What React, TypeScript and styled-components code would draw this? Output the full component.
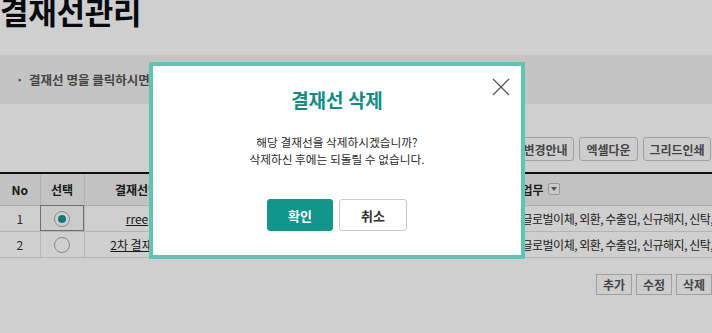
import React from "react";
import styled, { createGlobalStyle } from "styled-components";

const GlobalStyle = createGlobalStyle`
  html, body {
    margin: 0;
    padding: 0;
    background: #ffffff;
    overflow: hidden;
  }
  body {
    font-family: "Noto Sans CJK KR", "Noto Sans", sans-serif;
    color: #222;
  }
  * {
    box-sizing: border-box;
  }
`;

const Page = styled.div`
  width: 712px;
  height: 333px;
  overflow: hidden;
`;

const Title = styled.h1`
  margin: -5px 0 0 0;
  height: 31px;
  font-size: 31px;
  line-height: 31px;
  font-weight: 700;
  color: #0c0c14;
  letter-spacing: -0.3px;
`;

const InfoBox = styled.div`
  margin-top: 29px;
  height: 49px;
  background: #f2f2f2;
  display: flex;
  align-items: center;
  padding-left: 16px;
  font-size: 12.5px;
  font-weight: 700;
  color: #555;
`;

const Toolbar = styled.div`
  margin-top: 33px;
  display: flex;
  justify-content: flex-end;
  gap: 5px;
  padding-right: 1px;
`;

const ToolButton = styled.button<{ $w: number }>`
  width: ${(p) => p.$w}px;
  height: 24px;
  border: 1px solid #c6c6c6;
  border-radius: 3px;
  background: #fdfdfd;
  font-family: inherit;
  font-size: 12px;
  font-weight: 700;
  color: #555;
  padding: 0;
`;

const TableWrap = styled.div`
  margin-top: 11px;
  width: 712px;
  overflow: hidden;
`;

const Table = styled.table`
  width: 820px;
  border-collapse: collapse;
  table-layout: fixed;
  border-top: 2px solid #111;
  font-size: 12px;
`;

const Th = styled.th<{ $align?: string }>`
  height: 32px;
  background: #efefef;
  border-right: 1px solid #dcdcdc;
  border-bottom: 1px solid #d6d6d6;
  font-weight: 700;
  font-size: 12px;
  color: #222;
  text-align: ${(p) => p.$align || "center"};
  padding: 0;
`;

const Td = styled.td<{ $align?: string; $focus?: boolean }>`
  height: 26px;
  background: ${(p) => (p.$focus ? "#fbfbfb" : "#fff")};
  border-right: 1px solid #e0e0e0;
  border-bottom: 1px solid #dedede;
  outline: ${(p) => (p.$focus ? "1px solid #8a8a8a" : "none")};
  outline-offset: -1px;
  text-align: ${(p) => p.$align || "center"};
  color: #333;
  padding: 0 7px;
  white-space: nowrap;
  overflow: hidden;
`;

const TaskCell = styled(Td)`
  text-align: left;
  padding-left: 26px;
  letter-spacing: -0.5px;
  color: #2a2a2a;
`;

const LinkText = styled.span`
  text-decoration: underline;
  color: #222;
`;

const HeadInner = styled.span`
  display: inline-flex;
  align-items: center;
  gap: 4px;
  padding-left: 26px;
`;

const FilterIcon = styled.span`
  display: inline-flex;
  align-items: center;
  justify-content: center;
  width: 12px;
  height: 12px;
  border: 1px solid #b9b9b9;
  border-radius: 2px;
  background: #f8f8f8;
`;

const Radio = styled.span<{ $checked?: boolean }>`
  display: inline-flex;
  align-items: center;
  justify-content: center;
  width: 16px;
  height: 16px;
  border-radius: 50%;
  border: 1px solid #a9a9a9;
  background: #fff;
  vertical-align: middle;

  &::after {
    content: "";
    width: 8px;
    height: 8px;
    border-radius: 50%;
    background: ${(p) => (p.$checked ? "#119a8c" : "transparent")};
  }
`;

const BottomBar = styled.div`
  margin-top: 16px;
  display: flex;
  justify-content: flex-end;
  gap: 4px;
`;

const SmallButton = styled.button`
  width: 36px;
  height: 21px;
  border: 1px solid #c6c6c6;
  background: #fdfdfd;
  font-family: inherit;
  font-size: 12px;
  font-weight: 700;
  color: #555;
  padding: 0;
`;

const Dim = styled.div`
  position: fixed;
  inset: 0;
  background: rgba(0, 0, 0, 0.19);
`;

const Modal = styled.div`
  position: absolute;
  left: 149px;
  top: 62px;
  width: 376px;
  height: 197px;
  border: 4px solid #5cc5b3;
  background: #fff;
  display: flex;
  flex-direction: column;
  align-items: center;
  padding-top: 22px;
`;

const CloseButton = styled.button`
  position: absolute;
  top: 12px;
  right: 11px;
  width: 18px;
  height: 18px;
  border: 0;
  padding: 0;
  background: transparent;
  display: flex;
`;

const ModalTitle = styled.h2`
  margin: 0;
  font-size: 19px;
  line-height: 24px;
  font-weight: 700;
  color: #0f8e83;
`;

const Message = styled.p`
  margin: 21px 0 0 0;
  font-size: 11.7px;
  line-height: 17px;
  color: #2a2a2a;
  text-align: center;
`;

const ButtonRow = styled.div`
  margin-top: 32px;
  display: flex;
  gap: 6px;
`;

const DialogButton = styled.button<{ $primary?: boolean }>`
  width: ${(p) => (p.$primary ? 66 : 68)}px;
  height: 32px;
  border-radius: 3px;
  border: 1px solid ${(p) => (p.$primary ? "#10968a" : "#c9c9c9")};
  background: ${(p) => (p.$primary ? "#10968a" : "#fff")};
  color: ${(p) => (p.$primary ? "#fff" : "#333")};
  font-family: inherit;
  font-size: 13px;
  font-weight: 700;
  padding: 0;
`;

const rows = [
  { no: 1, name: "rree", checked: true },
  { no: 2, name: "2차 결재선", checked: false },
];

export default function App() {
  return (
    <>
      <GlobalStyle />
      <Page>
        <Title>결재선관리</Title>
        <InfoBox>· &nbsp;결재선 명을 클릭하시면 상세 내용을 확인하실 수 있습니다.</InfoBox>
        <Toolbar>
          <ToolButton $w={90}>결재선변경안내</ToolButton>
          <ToolButton $w={59}>엑셀다운</ToolButton>
          <ToolButton $w={68}>그리드인쇄</ToolButton>
        </Toolbar>
        <TableWrap>
          <Table>
            <colgroup>
              <col style={{ width: 40 }} />
              <col style={{ width: 44 }} />
              <col style={{ width: 106 }} />
              <col style={{ width: 150 }} />
              <col style={{ width: 155 }} />
              <col style={{ width: 325 }} />
            </colgroup>
            <thead>
              <tr>
                <Th>No</Th>
                <Th>선택</Th>
                <Th>결재선명</Th>
                <Th>결재자</Th>
                <Th>등록일</Th>
                <Th $align="left">
                  <HeadInner>
                    업무
                    <FilterIcon>
                      <svg width="6" height="4" viewBox="0 0 6 4">
                        <path d="M0 0h6L3 4z" fill="#666" />
                      </svg>
                    </FilterIcon>
                  </HeadInner>
                </Th>
              </tr>
            </thead>
            <tbody>
              {rows.map((r) => (
                <tr key={r.no}>
                  <Td>{r.no}</Td>
                  <Td $focus={r.checked}>
                    <Radio $checked={r.checked} />
                  </Td>
                  <Td>
                    <LinkText>{r.name}</LinkText>
                  </Td>
                  <Td>홍길동 외 2명</Td>
                  <Td>2023-05-12</Td>
                  <TaskCell>글로벌이체, 외환, 수출입, 신규해지, 신탁, 대출</TaskCell>
                </tr>
              ))}
            </tbody>
          </Table>
        </TableWrap>
        <BottomBar>
          <SmallButton>추가</SmallButton>
          <SmallButton>수정</SmallButton>
          <SmallButton>삭제</SmallButton>
        </BottomBar>
      </Page>
      <Dim>
        <Modal>
          <CloseButton aria-label="닫기">
            <svg width="18" height="18" viewBox="0 0 18 18">
              <path d="M1 1L17 17M17 1L1 17" stroke="#555" strokeWidth="1.2" />
            </svg>
          </CloseButton>
          <ModalTitle>결재선 삭제</ModalTitle>
          <Message>
            해당 결재선을 삭제하시겠습니까?
            <br />
            삭제하신 후에는 되돌릴 수 없습니다.
          </Message>
          <ButtonRow>
            <DialogButton $primary>확인</DialogButton>
            <DialogButton>취소</DialogButton>
          </ButtonRow>
        </Modal>
      </Dim>
    </>
  );
}
